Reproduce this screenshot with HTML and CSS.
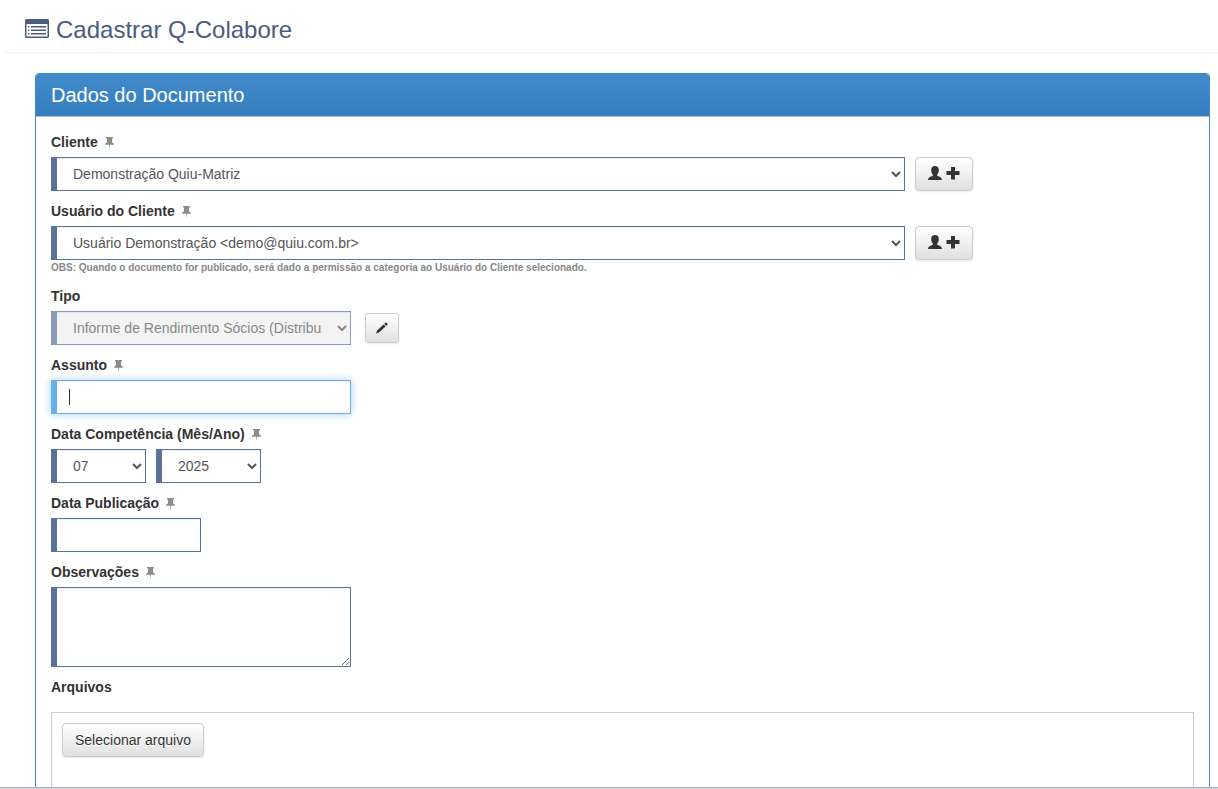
FILE: index.html
```
<!DOCTYPE html>
<html lang="pt-BR">
<head>
  <meta charset="UTF-8">
  <meta name="viewport" content="width=device-width, initial-scale=1.0">
  <title>Cadastrar Q-Colabore</title>
  <link rel="stylesheet" href="styles.css">
</head>
<body>
  <svg class="sprite" aria-hidden="true">
    <symbol id="pin" viewBox="0 0 9 12">
      <path d="M1 0h7v1.500H7V5.500c1.200.3 2 1 2 2.200H5L4.500 12 4 7.700H0C0 6.500.8 5.800 2 5.500V1.500H1z"/>
    </symbol>
    <symbol id="user" viewBox="0 0 14 14">
      <path d="M7 0c2.400 0 3.800 1.500 3.800 4 0 2-.7 3.500-1.600 4.600v1.200c2.600.8 4.600 1.700 4.800 4.200H0c.2-2.500 2.200-3.400 4.800-4.200V8.600C3.900 7.500 3.200 6 3.200 4 3.200 1.500 4.600 0 7 0z"/>
    </symbol>
    <symbol id="plus" viewBox="0 0 14 14">
      <path d="M5 1h4v4h4.500v4H9v4.500H5V9H.5V5H5z"/>
    </symbol>
    <symbol id="pencil" viewBox="0 0 13 12">
      <path d="M0 12l1.200-3.200L8.200 2.200l2.200 2.200-7.200 6.500zM8.900 1.600l1.300-1.200c.4-.4.9-.4 1.300 0l.9.9c.4.400.4.900 0 1.300l-1.300 1.200z"/>
    </symbol>
  </svg>

  <main class="page">
    <h1 class="page-header">
      <svg class="icon-list" viewBox="0 0 24 19" aria-hidden="true">
        <path fill-rule="evenodd" d="M1.500 0h21A1.500 1.500 0 0 1 24 1.500v16a1.500 1.500 0 0 1-1.500 1.500h-21A1.500 1.500 0 0 1 0 17.500v-16A1.500 1.500 0 0 1 1.500 0zM1.500 5v12.500h21V5z"/>
        <path d="M3 7h1.500v1.500H3zM6 7h15v1.500H6zM3 10.500h1.500V12H3zM6 10.500h15V12H6zM3 14h1.500v1.500H3zM6 14h15v1.500H6z"/>
      </svg>
      Cadastrar Q-Colabore
    </h1>

    <section class="panel">
      <h2 class="panel-heading">Dados do Documento</h2>
      <form class="panel-body">
        <div class="form-group">
          <label for="cliente">Cliente <svg class="pin"><use href="#pin"/></svg></label>
          <div class="row">
            <select id="cliente" class="form-control wide">
              <option>Demonstração Quiu-Matriz</option>
            </select>
            <button type="button" class="btn" aria-label="Novo cliente"><svg class="icon"><use href="#user"/></svg><svg class="icon"><use href="#plus"/></svg></button>
          </div>
        </div>

        <div class="form-group">
          <label for="usuario">Usuário do Cliente <svg class="pin"><use href="#pin"/></svg></label>
          <div class="row">
            <select id="usuario" class="form-control wide">
              <option>Usuário Demonstração &lt;demo@quiu.com.br&gt;</option>
            </select>
            <button type="button" class="btn" aria-label="Novo usuário"><svg class="icon"><use href="#user"/></svg><svg class="icon"><use href="#plus"/></svg></button>
          </div>
          <p class="help">OBS: Quando o documento for publicado, será dado a permissão a categoria ao Usuário do Cliente selecionado.</p>
        </div>

        <div class="form-group">
          <label for="tipo">Tipo</label>
          <div class="row row-tipo">
            <select id="tipo" class="form-control medium" disabled>
              <option>Informe de Rendimento Sócios (Distribuição de Lucros)</option>
            </select>
            <button type="button" class="btn btn-sm" aria-label="Editar tipo"><svg class="icon-pencil"><use href="#pencil"/></svg></button>
          </div>
        </div>

        <div class="form-group">
          <label for="assunto">Assunto <svg class="pin"><use href="#pin"/></svg></label>
          <input type="text" id="assunto" class="form-control medium" placeholder=" " autofocus>
        </div>

        <div class="form-group">
          <label for="mes">Data Competência (Mês/Ano) <svg class="pin"><use href="#pin"/></svg></label>
          <div class="row">
            <select id="mes" class="form-control month">
              <option>07</option>
            </select>
            <select id="ano" class="form-control year" aria-label="Ano">
              <option>2025</option>
            </select>
          </div>
        </div>

        <div class="form-group">
          <label for="publicacao">Data Publicação <svg class="pin"><use href="#pin"/></svg></label>
          <input type="text" id="publicacao" class="form-control date">
        </div>

        <div class="form-group">
          <label for="obs">Observações <svg class="pin"><use href="#pin"/></svg></label>
          <textarea id="obs" class="form-control medium"></textarea>
        </div>

        <div class="form-group">
          <label for="arquivo">Arquivos</label>
          <div class="files">
            <button type="button" id="arquivo" class="btn">Selecionar arquivo</button>
          </div>
        </div>
      </form>
    </section>
  </main>
  <footer class="bottom-bar"></footer>

  <script>
    document.getElementById('assunto').focus();
  </script>
</body>
</html>
```
FILE: styles.css
```
* {
  box-sizing: border-box;
}
body {
  display: flex;
  flex-direction: column;
  height: 100vh;
  margin: 0;
  font-family: Arial, "Liberation Sans", sans-serif;
  font-size: 14px;
  line-height: 20px;
  color: #333;
  background: #fff;
}
.sprite {
  display: none;
}
.page {
  flex: 1;
  min-height: 0;
  overflow: hidden;
  padding-left: 5px;
}
.page-header {
  display: flex;
  align-items: center;
  gap: 7px;
  margin: 0 0 20px;
  padding: 16px 20px 8px;
  border-bottom: 1px solid #eee;
  font-size: 24px;
  font-weight: normal;
  line-height: 28px;
  color: #4a5c7f;
}
.icon-list {
  width: 24px;
  height: 19px;
  margin-bottom: 3px;
  fill: #4a5c7f;
}

.panel {
  margin: 0 8px 0 30px;
  border: 1px solid #428bca;
  border-radius: 4px;
}
.panel-heading {
  margin: 0;
  padding: 10px 15px;
  border-bottom: 1px solid #aebbd6;
  border-radius: 3px 3px 0 0;
  background: linear-gradient(#428bca, #357ebd);
  font-size: 20px;
  font-weight: normal;
  line-height: 22px;
  color: #fff;
}
.panel-body {
  padding: 15px;
}

.form-group {
  margin-bottom: 10px;
}
label {
  display: block;
  width: fit-content;
  margin-bottom: 5px;
  font-weight: bold;
}
.pin {
  width: 9px;
  height: 12px;
  margin-left: 3px;
  vertical-align: -2px;
  fill: #8c8c8c;
}
.row {
  display: flex;
  gap: 10px;
}
.row-tipo {
  align-items: center;
  gap: 14px;
}
.form-control {
  display: block;
  height: 34px;
  padding: 6px 12px;
  border: 1px solid #5b739b;
  border-left-width: 6px;
  border-radius: 0;
  outline: none;
  background-color: #fff;
  box-shadow: inset 0 1px 1px rgba(0, 0, 0, 0.075);
  font: inherit;
  color: #555;
}
.form-control:focus {
  border-color: #66afe9;
  box-shadow: inset 0 1px 1px rgba(0, 0, 0, 0.075), 0 0 8px rgba(102, 175, 233, 0.6);
}
/* steady cursor while the field is empty */
.form-control:focus:placeholder-shown {
  caret-color: transparent;
  background: linear-gradient(#333, #333) 12px center / 1px 16px no-repeat #fff;
}
.form-control:disabled {
  opacity: 0.7;
  background-color: #eee;
}
.wide {
  width: calc(75% - 3px);
}
.medium {
  width: 300px;
}
.month {
  width: 95px;
}
.year {
  width: 105px;
}
.date {
  width: 150px;
}
textarea.form-control {
  height: 80px;
}
.help {
  margin: 0;
  font-size: 10px;
  font-weight: bold;
  line-height: 16px;
  color: #888;
}

.btn {
  display: inline-flex;
  align-items: center;
  gap: 4px;
  height: 34px;
  padding: 6px 12px;
  border: 1px solid #ccc;
  border-radius: 4px;
  background: linear-gradient(#fff, #e0e0e0);
  box-shadow: 0 1px 2px rgba(0, 0, 0, 0.1);
  font: inherit;
  color: #333;
  text-shadow: 0 1px 0 #fff;
}
.btn svg {
  fill: #333;
}
.btn-sm {
  height: 30px;
  padding: 5px 10px;
  border-radius: 3px;
}
.icon {
  width: 14px;
  height: 14px;
  margin-bottom: 2px;
}
.icon-pencil {
  width: 12px;
  height: 12px;
}
.files {
  min-height: 200px;
  margin-top: 15px;
  padding: 10px;
  border: 1px solid #ccc;
}
.bottom-bar {
  height: 2px;
  border-top: 1px solid #a9a9b0;
  background: #dcdce4;
}
```
